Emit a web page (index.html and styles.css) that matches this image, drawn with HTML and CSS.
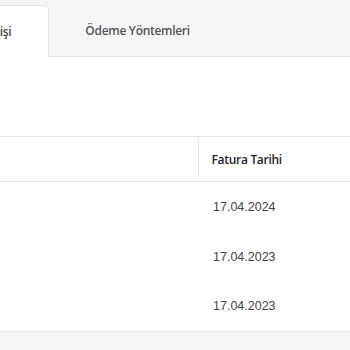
FILE: index.html
```html
<!DOCTYPE html>
<html lang="tr">
<head>
    <meta charset="UTF-8">
    <meta name="viewport" content="width=device-width, initial-scale=1.0">
    <title>Fatura Geçmişi</title>
    <link rel="stylesheet" href="styles.css">
</head>
<body>
    <nav class="tabs">
        <a class="tab tab-active" href="#">Fatura Geçmişi</a>
        <a class="tab" href="#">Ödeme Yöntemleri</a>
    </nav>
    <main class="content">
        <table class="invoices">
            <thead>
                <tr>
                    <th class="col-no"></th>
                    <th class="col-date">Fatura Tarihi</th>
                </tr>
            </thead>
            <tbody>
                <tr>
                    <td class="col-no"></td>
                    <td class="col-date">17.04.2024</td>
                </tr>
                <tr>
                    <td class="col-no"></td>
                    <td class="col-date">17.04.2023</td>
                </tr>
                <tr class="row-last">
                    <td class="col-no"></td>
                    <td class="col-date">17.04.2023</td>
                </tr>
            </tbody>
        </table>
    </main>
</body>
</html>
```

FILE: styles.css
```css
* {
    margin: 0;
    padding: 0;
    box-sizing: border-box;
}

body {
    font-family: 'Open Sans', sans-serif;
    background: #f4f5f7;
    color: #333;
    overflow: hidden;
}

/* Sekmeler */
.tabs {
    display: flex;
    align-items: flex-end;
    height: 57px;
    background: #f4f5f7;
    border-bottom: 1px solid #e4e5e8;
}

.tab {
    display: flex;
    align-items: center;
    height: 51px;
    margin-bottom: -1px;
    font-size: 12px;
    font-weight: 600;
    letter-spacing: -0.3px;
    color: #555;
    text-decoration: none;
    white-space: nowrap;
}

.tab-active {
    margin-left: -71px;
    padding: 0 37px 0 0;
    height: 52px;
    background: #fff;
    border: 1px solid #e4e5e8;
    border-bottom: none;
    border-left: none;
    border-top-right-radius: 6px;
    color: #444;
}

.tab + .tab {
    padding: 0 36px;
    padding-bottom: 2px;
}

/* Tablo */
.content {
    background: #fff;
    padding-top: 79px;
    border-bottom: 1px solid #e4e5e8;
}

.invoices {
    width: 100%;
    border-collapse: collapse;
}

.invoices th {
    height: 45px;
    border-top: 1px solid #e8e9eb;
    border-bottom: 1px solid #e8e9eb;
    text-align: left;
    font-size: 12px;
    font-weight: 600;
    letter-spacing: -0.3px;
    color: #222;
}

.invoices th.col-no {
    border-right: 1px solid #e8e9eb;
}

.col-no {
    width: 198px;
}

.invoices th.col-date {
    padding-left: 13px;
}

.invoices td {
    height: 50px;
    font-family: 'Liberation Sans', Arial, sans-serif;
    font-size: 12.5px;
    color: #444;
}

.invoices td.col-date {
    padding-left: 15px;
}

.row-last td {
    height: 49px;
}
```
